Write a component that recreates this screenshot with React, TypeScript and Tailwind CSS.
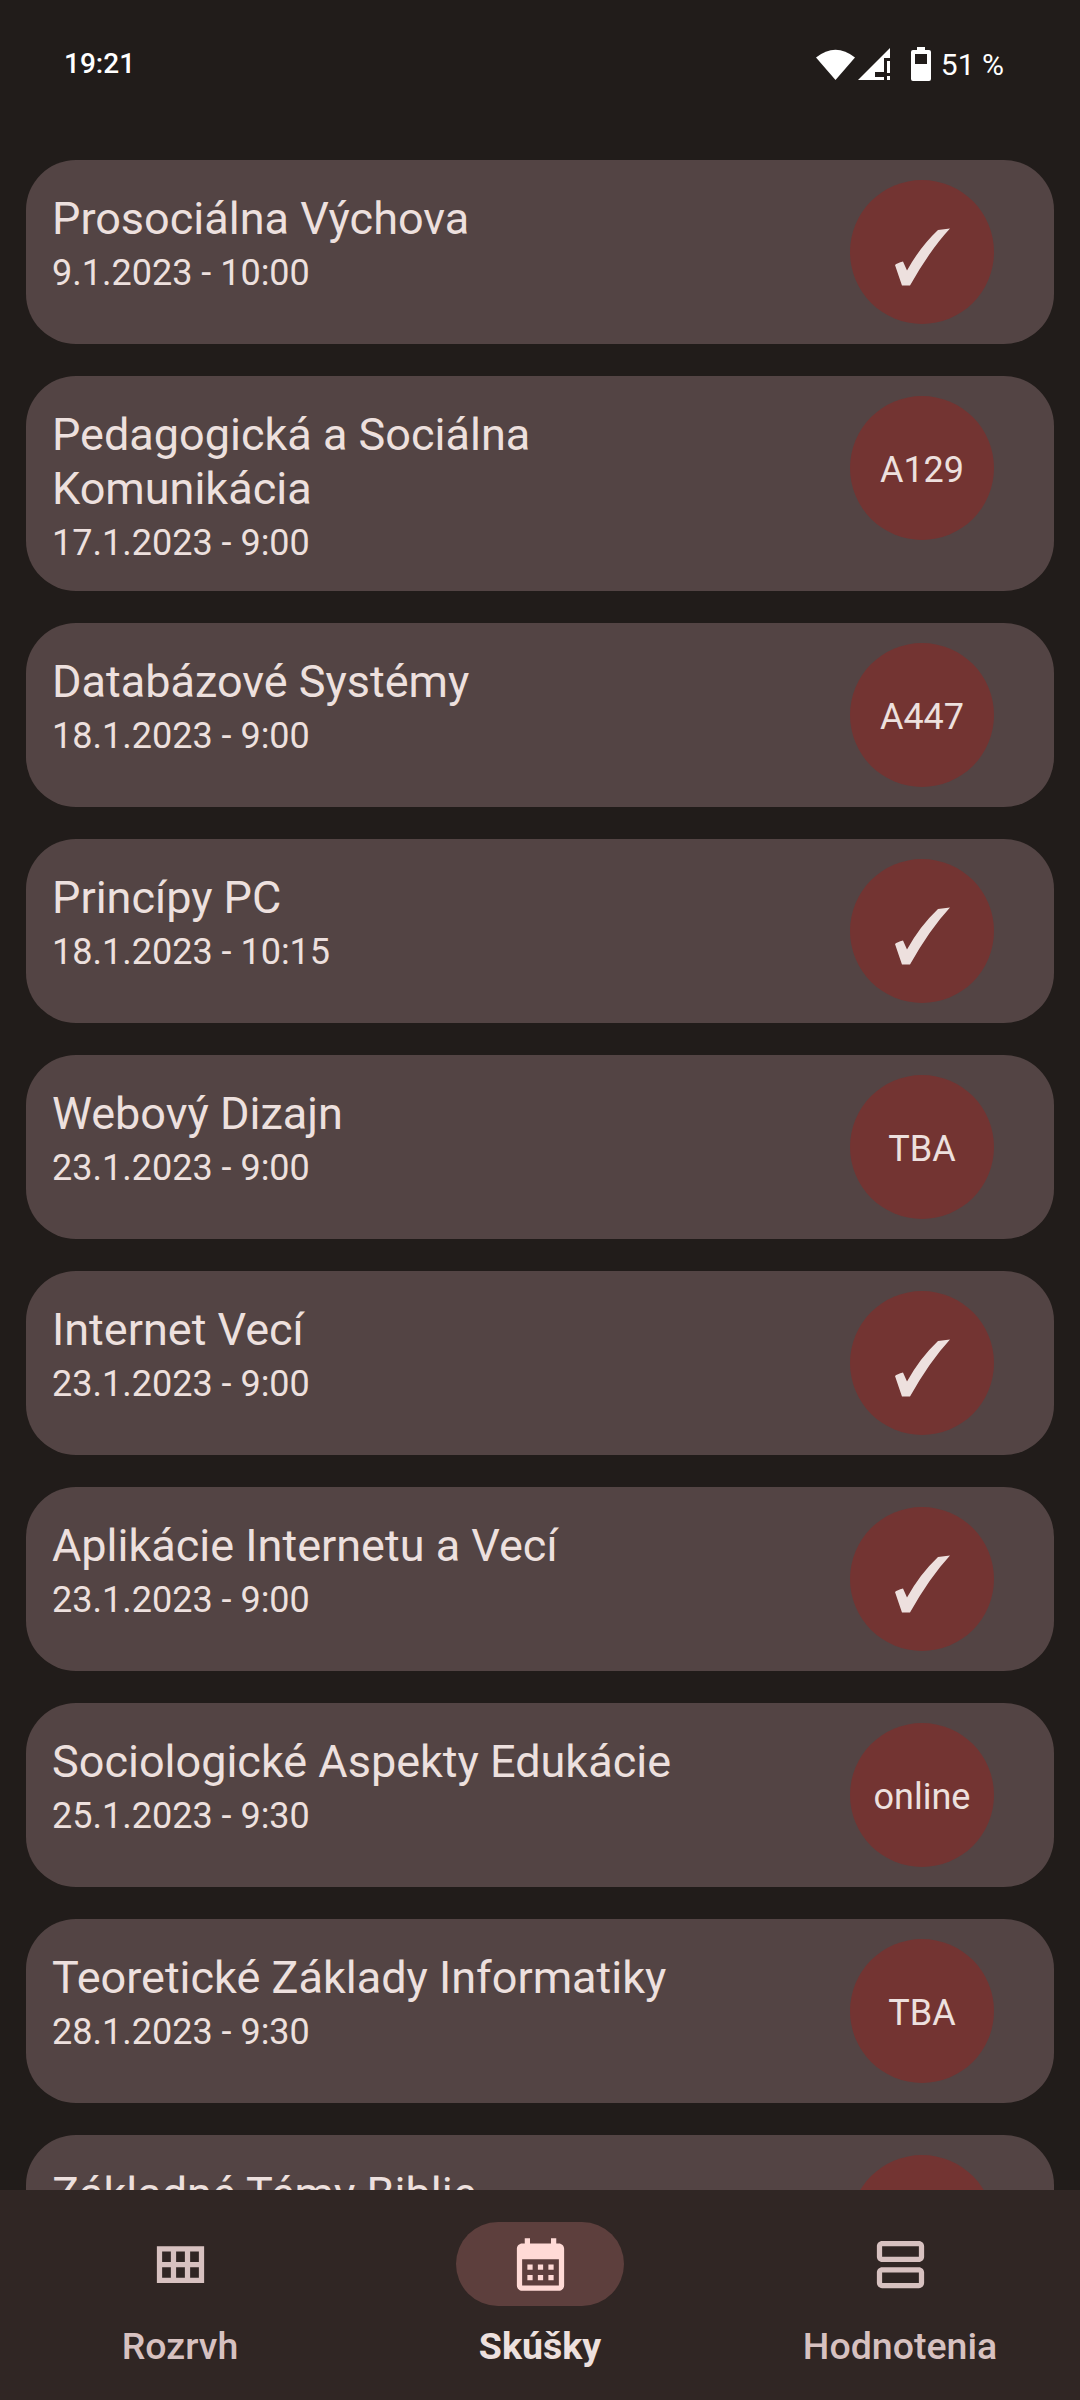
import type { ReactNode } from "react";

type Skuska = {
  nazov: string;
  datum: string;
  miestnost?: string;
};

const skusky: Skuska[] = [
  { nazov: "Prosociálna Výchova", datum: "9.1.2023 - 10:00" },
  { nazov: "Pedagogická a Sociálna Komunikácia", datum: "17.1.2023 - 9:00", miestnost: "A129" },
  { nazov: "Databázové Systémy", datum: "18.1.2023 - 9:00", miestnost: "A447" },
  { nazov: "Princípy PC", datum: "18.1.2023 - 10:15" },
  { nazov: "Webový Dizajn", datum: "23.1.2023 - 9:00", miestnost: "TBA" },
  { nazov: "Internet Vecí", datum: "23.1.2023 - 9:00" },
  { nazov: "Aplikácie Internetu a Vecí", datum: "23.1.2023 - 9:00" },
  { nazov: "Sociologické Aspekty Edukácie", datum: "25.1.2023 - 9:30", miestnost: "online" },
  { nazov: "Teoretické Základy Informatiky", datum: "28.1.2023 - 9:30", miestnost: "TBA" },
];

function CheckMark() {
  return (
    <svg width="55" height="58" viewBox="75 66 55 58" className="mt-[7px]" fill="#ede0de">
      <path d="M75 103Q77 101 83 99.5L87 108.5Q100 85 118 68L130 66.5Q110 88 90 123.5L82 123.5Q78 112 75 103Z" />
    </svg>
  );
}

function StatusBar() {
  return (
    <div className="h-[128px] shrink-0 flex items-center justify-between pl-[64px] pr-[76px] text-white font-medium text-[28px]">
      <span>19:21</span>
      <div className="flex items-center">
        <svg width="39" height="32" viewBox="0 0 39 32" fill="white">
          <path d="M0 9.5Q19.5 -6 39 9.5L19.5 32Z" />
        </svg>
        <svg width="33" height="32" viewBox="0 0 33 32" fill="white" className="ml-[3px]">
          <path fillRule="evenodd" d="M0 32L32 0V10H26V24H17V29H26V32Z" />
          <rect x="29" y="13" width="3" height="12" />
          <rect x="29" y="28" width="3" height="4" />
        </svg>
        <svg width="20" height="34" viewBox="0 0 20 34" fill="white" className="ml-[20px]">
          <path
            fillRule="evenodd"
            d="M6 0H14V3H18Q20 3 20 5V32Q20 34 18 34H2Q0 34 0 32V5Q0 3 2 3H6ZM4 7V17H16V7Z"
          />
        </svg>
        <span className="ml-[10px] font-normal text-[30px]">51 %</span>
      </div>
    </div>
  );
}

function SkuskaCard({ nazov, datum, children }: { nazov: string; datum: string; children?: ReactNode }) {
  return (
    <div className="shrink-0 min-h-[184px] rounded-[50px] bg-[#534444] flex items-start justify-between pl-[26px] pr-[60px] pt-[20px]">
      <div className="w-[640px] pt-[12px] pb-[20px] text-[#ede0de]">
        <div className="text-[45px] leading-[54px]">{nazov}</div>
        <div className="text-[36px] leading-[55px]">{datum}</div>
      </div>
      <div className="w-[144px] h-[144px] pt-[3px] rounded-full bg-[#733432] flex items-center justify-center text-[#ede0de] text-[36px]">
        {children}
      </div>
    </div>
  );
}

function NavItem({ label, active, children }: { label: string; active?: boolean; children: ReactNode }) {
  return (
    <div className="flex flex-col items-center">
      <div
        className={`w-[168px] h-[84px] rounded-full flex items-center justify-center ${
          active ? "bg-[#5d3f3d]" : ""
        }`}
      >
        {children}
      </div>
      <span
        className={`mt-[16px] text-[37.5px] leading-[48px] ${
          active ? "font-bold text-[#ede0de]" : "font-medium text-[#d7c1c0]"
        }`}
      >
        {label}
      </span>
    </div>
  );
}

export default function App() {
  return (
    <div className="w-[1080px] h-[2400px] bg-[#211c1a] flex flex-col overflow-hidden font-['Roboto',sans-serif]">
      <StatusBar />

      <div className="flex-1 min-h-0 overflow-hidden pt-[32px] px-[26px] flex flex-col gap-[32px]">
        {skusky.map((s) => (
          <SkuskaCard key={s.nazov + s.datum} nazov={s.nazov} datum={s.datum}>
            {s.miestnost ?? <CheckMark />}
          </SkuskaCard>
        ))}
        <SkuskaCard nazov="Základné Témy Biblie" datum={"\u00a0"} />
      </div>

      <div className="h-[210px] shrink-0 bg-[#302624] grid grid-cols-3 pt-[32px]">
        <NavItem label="Rozrvh">
          <svg width="63" height="63" viewBox="0 0 24 24" fill="#d7c1c0">
            <path
              fillRule="evenodd"
              d="M3 5v14h18V5H3zM5 7h3.33v4H5V7zm5.33 0h3.34v4h-3.34V7zm5.34 0H19v4h-3.33V7zM5 13h3.33v4H5v-4zm5.33 0h3.34v4h-3.34v-4zm5.34 0H19v4h-3.33v-4z"
            />
          </svg>
        </NavItem>
        <NavItem label="Skúšky" active>
          <svg width="63" height="63" viewBox="0 0 24 24" fill="#ffdad6">
            <path
              fillRule="evenodd"
              d="M19 4h-1V2h-2v2H8V2H6v2H5c-1.1 0-2 .9-2 2v14c0 1.1.9 2 2 2h14c1.1 0 2-.9 2-2V6c0-1.1-.9-2-2-2zM19 20H5V10h14v10z"
            />
            <rect x="7" y="12" width="2" height="2" />
            <rect x="11" y="12" width="2" height="2" />
            <rect x="15" y="12" width="2" height="2" />
            <rect x="7" y="16" width="2" height="2" />
            <rect x="11" y="16" width="2" height="2" />
            <rect x="15" y="16" width="2" height="2" />
          </svg>
        </NavItem>
        <NavItem label="Hodnotenia">
          <svg width="63" height="63" viewBox="0 0 24 24" fill="#d7c1c0">
            <path
              fillRule="evenodd"
              d="M19 13H5c-1.1 0-2 .9-2 2v4c0 1.1.9 2 2 2h14c1.1 0 2-.9 2-2v-4c0-1.1-.9-2-2-2zm0 6H5v-4h14v4zM19 3H5c-1.1 0-2 .9-2 2v4c0 1.1.9 2 2 2h14c1.1 0 2-.9 2-2V5c0-1.1-.9-2-2-2zm0 6H5V5h14v4z"
            />
          </svg>
        </NavItem>
      </div>
    </div>
  );
}
